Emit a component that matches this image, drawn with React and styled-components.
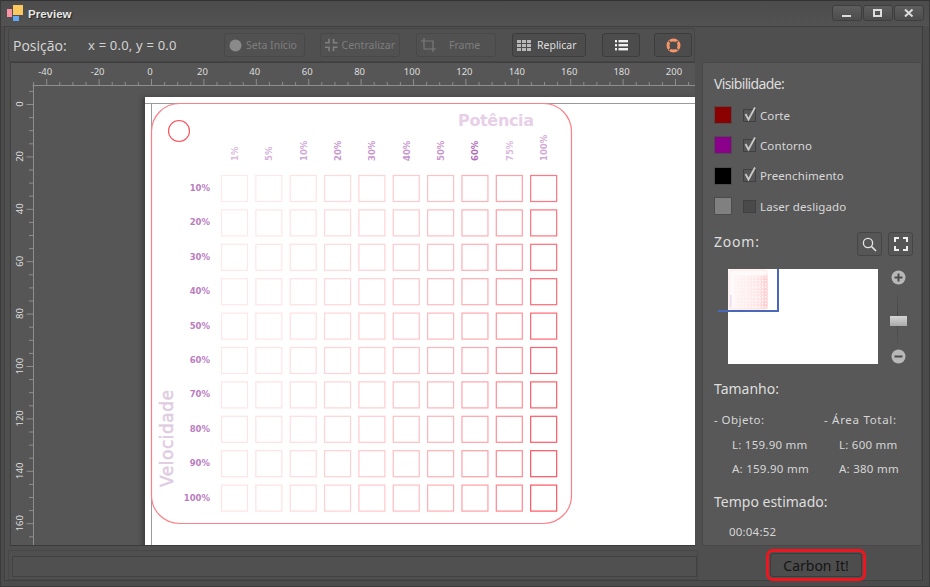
import React from 'react';
import styled, { createGlobalStyle } from 'styled-components';

const Global = createGlobalStyle`
  html, body { margin: 0; padding: 0; background: #454545; }
  body { font-family: "Noto Sans", "Liberation Sans", sans-serif; }
`;

const Win = styled.div`
  width: 930px; height: 587px; box-sizing: border-box; overflow: hidden;
  background: #4b4b4b; border: 1px solid #3a3a3a; border-top-color: #333;
  display: flex; flex-direction: column; position: relative;
`;
const TitleBar = styled.div`
  height: 25px; flex: none; display: flex; align-items: center; padding: 0 5px 0 6px;
  background: linear-gradient(#4c4c4c, #525252);
`;
const Title = styled.div`
  margin-left: 4px; color: #e6e6e6; font: bold 11.5px "Liberation Sans", sans-serif;
  text-shadow: 1px 1px 1px #222;
`;
const WinBtns = styled.div`margin-left: auto; margin-top: -2px; display: flex; gap: 1px;`;
const WinBtn = styled.div`
  width: 28px; height: 14px; border: 1px solid #3e3e3e; border-radius: 3px;
  background: linear-gradient(#5e5e5e, #4c4c4c); display: flex; align-items: center; justify-content: center;
`;
const Body = styled.div`
  flex: 1; min-height: 0; margin: 0 6px 5px 3px; border: 1px solid #404040; border-right-color:#3c3c3c;
  background: #4f4f4f; display: flex; flex-direction: column; padding: 1px 0 0 3px;
`;
const Workspace = styled.div`display: flex; gap: 7px; height: 518px; flex: none;`;
const LeftCol = styled.div`width: 687px; flex: none; display: flex; flex-direction: column;`;
const Toolbar = styled.div`
  height: 34px; box-sizing: border-box; flex: none; display: flex; align-items: center;
  background: #505050; border: 1px solid #454545; border-radius: 3px; padding: 0 0 0 4px;
`;
const PosLabel = styled.span`color: #d8d8d8; font-size: 14px; width: 75px; flex:none; font-family:"Open Sans",sans-serif;`;
const PosValue = styled.span`color: #d2d2d2; font-size: 13px; width: 136px; flex:none; letter-spacing:.2px; white-space: nowrap;`;
const ToolBtn = styled.button`
  height: 24px; box-sizing: border-box; width: ${p => p.$w}px; margin-right: ${p => p.$mr}px; padding: 0 4px;
  display: flex; align-items: center; justify-content: ${p => p.$center ? 'center' : 'flex-start'}; gap: 4px;
  border-radius: 3px; flex: none; font: 10.5px "Noto Sans", sans-serif;
  background: ${p => p.$off ? '#515151' : '#4c4c4c'};
  border: 1px solid ${p => p.$off ? '#484848' : '#3c3c3c'};
  color: ${p => p.$off ? '#7e7e7e' : '#dedede'};
`;
const BtnText = styled.span`white-space: nowrap; margin-left: ${p => p.$ml || 0}px;`;
const Canvas = styled.div`
  flex: 1; min-height: 0; position: relative; overflow: hidden; margin: 0 0 0 2px;
  background: #565656; border: 1px solid #3f3f3f; border-bottom-color:#3a3a3a; border-right: 0;
`;
const RulerArt = styled.svg`position: absolute; left: 0; top: 1px;`;
const Paper = styled.div`
  position: absolute; left: 134px; top: 34px; width: 560px; height: 460px; background: #fff;
  box-shadow: -3px 0 4px rgba(0,0,0,.25);
`;
const Side = styled.div`
  width: 220px; flex: none; box-sizing: border-box; margin-top: 34px; background: #585858;
  border: 1px solid #484848; border-radius: 3px; padding: 11px 11px 0; color: #dcdcdc;
  display: flex; flex-direction: column; height: 484px;
`;
const Heading = styled.div`
  font-size: 14px; line-height: 20px; color: #dedede; height: ${p => p.$h || 20}px;
  letter-spacing: ${p => p.$ls || 0}px;
`;
const VisRow = styled.div`display: flex; align-items: center; height: ${p => p.$h}px;`;
const Swatch = styled.div`
  width: 16px; height: 16px; background: ${p => p.$c}; border: 1px solid #4c4c4c; flex: none; margin-right: 11px;
`;
const Check = styled.div`
  width: 11px; height: 11px; border: 1px solid #404040; background: ${p => p.$on ? '#565656' : '#4a4a4a'}; flex: none; margin-right: 4px;
  position: relative;
`;
const CheckMark = styled.svg`position: absolute; left: 0; top: -4px;`;
const VisLabel = styled.span`font-size: 11.5px; color: #d8d8d8; letter-spacing: .1px;`;
const ZoomHead = styled.div`display: flex; align-items: center; justify-content: space-between; height: 30px; margin-top: 6px;`;
const ZoomBtns = styled.div`display: flex; gap: 6px; margin-top: 4px; margin-right: -3px;`;
const SqBtn = styled.div`
  width: 23px; height: 22px; border: 1px solid #454545; border-radius: 3px; background: #565656;
  display: flex; align-items: center; justify-content: center;
`;
const ZoomArea = styled.div`display: flex; height: 95px; margin-top: 12px; padding-left: 14px; gap: 9px;`;
const MiniMap = styled.div`width: 150px; height: 95px; background: #fff; position: relative; flex: none;`;
const MiniH = styled.div`position: absolute; left: -10px; top: 41px; width: 61px; height: 2px; background: #4a68bb;`;
const MiniV = styled.div`position: absolute; left: 49px; top: 0; width: 2px; height: 43px; background: #4a68bb;`;
const MiniArt = styled.svg`position: absolute; left: 0; top: 0; opacity: .65;`;
const SliderCol = styled.div`
  width: 22px; height: 94px; margin-top: 1px; flex: none; display: flex; flex-direction: column; align-items: center; justify-content: space-between; position: relative;
`;
const Track = styled.div`position: absolute; left: 10px; top: 14px; bottom: 12px; width: 1px; background: linear-gradient(#5a5a5a,#444,#5a5a5a);`;
const Thumb = styled.div`
  position: relative; width: 17px; height: 10px; background: linear-gradient(#d6d6d6, #aaa); margin-top: 8px;
`;
const RoundIcon = styled.svg`position: relative; display:block;`;
const SizeHead = styled(Heading)`margin-top: 15px;`;
const Cols = styled.div`display: grid; grid-template-columns: 110px 1fr; margin-top: 11px; font-size: 11.5px; color: #d6d6d6;`;
const SizeCell = styled.div`height: 24.5px; line-height: 20px; padding-left: ${p => p.$pad || 0}px; letter-spacing:${p => p.$ls || .25}px; white-space: nowrap;`;
const TimeHead = styled(Heading)`margin-top: 8px;`;
const TimeVal = styled.div`font-size: 11.5px; line-height: 20px; color: #d6d6d6; padding-left: 15px; margin-top: 10px; letter-spacing: .2px;`;
const Bottom = styled.div`display: flex; align-items: center; height: 30px; margin-top: 4px; flex: none;`;
const StatusOuter = styled.div`
  width: 690px; height: 30px; flex: none; box-sizing: border-box; border: 1px solid #474747; padding: 5px 0 0 3px;
`;
const Status = styled.div`
  width: 685px; height: 21px; box-sizing: border-box; border: 1px solid #424242; background: #505050;
`;
const Carbon = styled.button`
  margin-left: 72px; width: 92px; height: 24px; box-sizing: border-box; background: #4d4d4d; color: #151515;
  border: 1px solid #3d3d3d; border-radius: 3px; outline: 3px solid #f0141e; outline-offset: 1px;
  font: 14px "Noto Sans", sans-serif; padding: 0;
`;

const S = 2.62;
const HorizontalRuler = () => {
  const ticks = [];
  for (let v = -45; v <= 205; v += 5) {
    const x = 140 + v * S + 0.5;
    const major = v % 20 === 0;
    ticks.push(<line key={v} x1={x} x2={x} y1={major ? 15 : 18} y2={21} stroke="#8e8e8e" />);
  }
  const ticksV = [];
  for (let v = -5; v <= 165; v += 5) {
    const y = 40.5 + v * S;
    const major = v % 20 === 0;
    ticksV.push(<line key={v} y1={y} y2={y} x1={major ? 15.5 : 18} x2={22} stroke="#8e8e8e" />);
  }
  const labels = [-40,-20,0,20,40,60,80,100,120,140,160,180,200];
  const vLabels = [0,20,40,60,80,100,120,140,160];
  return (
    <RulerArt width="684" height="482" fontFamily="'Noto Sans', sans-serif" fontSize="9.5" fill="#dedede">
      <line x1="21.5" x2="684" y1="21.5" y2="21.5" stroke="#8e8e8e" />
      <line x1="22.5" x2="22.5" y1="21" y2="482" stroke="#8e8e8e" />
      {ticks}{ticksV}
      {labels.map(v => <text key={v} x={140 + v * S - 1} y="11" textAnchor="middle">{v}</text>)}
      {vLabels.map(v => <text key={v} textAnchor="middle" transform={`translate(12 ${40 + v * S}) rotate(-90)`}>{v}</text>)}
    </RulerArt>
  );
};

const powers = ['1%','5%','10%','20%','30%','40%','50%','60%','75%','100%'];
const speeds = ['10%','20%','30%','40%','50%','60%','70%','80%','90%','100%'];
const alphas = [.16,.18,.21,.27,.32,.38,.46,.56,.7,1];
const labelAlpha = [.4,.45,.5,.6,.6,.6,.6,.85,.4,.5];

const Drawing = () => (
  <svg width="560" height="460" fontFamily="'DejaVu Sans', sans-serif">
    <line x1="0" x2="560" y1="6.5" y2="6.5" stroke="#9a9a9a" />
    <line x1="6.5" x2="6.5" y1="6" y2="460" stroke="#9a9a9a" />
    <rect x="6.5" y="6.5" width="420" height="420" rx="28" ry="28" fill="#fff" stroke="#ff7f88" strokeWidth="1.2" />
    <circle cx="34" cy="34" r="10.5" fill="none" stroke="#ff4d58" strokeWidth="1.1" />
    <text x="351" y="29" textAnchor="middle" fontSize="16" fontWeight="bold" fill="#e8cfe8" textLength="76">Potência</text>
    <text transform="translate(28 390) rotate(-90)" fontSize="17" fill="#e0cce2" stroke="#e0cce2" strokeWidth=".5" textLength="97">Velocidade</text>
    {powers.map((p, c) => (
      <text key={p} transform={`translate(${93 + c * 34.35} 64) rotate(-90)`} fontSize="8.5" fontWeight="bold" fill="#a552ad" opacity={labelAlpha[c]}>{p}</text>
    ))}
    {speeds.map((p, r) => (
      <text key={p} x="65" y={94 + r * 34.4} textAnchor="end" fontSize="8.5" fontWeight="bold" fill="#a552ad" opacity={.75}>{p}</text>
    ))}
    {speeds.map((_, r) => powers.map((__, c) => (
      <rect key={`${r}-${c}`} x={76.5 + c * 34.35} y={78.5 + r * 34.4} width="26" height="26" fill="none"
        stroke="#ff5560" strokeWidth="1.2" opacity={alphas[c] * (0.8 + r * 0.025)} />
    )))}
  </svg>
);

const Thumbnail = () => (
  <MiniArt width="41" height="41">
    <rect x="1" y="1" width="38" height="39" rx="3" fill="#fff8f8" stroke="#ffd8da" />
    {Array.from({ length: 10 }).map((_, r) => Array.from({ length: 10 }).map((__, c) => (
      <rect key={`${r}${c}`} x={7 + c * 3.3} y={7 + r * 3.3} width="2.4" height="2.4" fill="none" stroke="#ff8a90" strokeWidth=".5" opacity={alphas[c]} />
    )))}
    <rect x="2" y="26" width="1.5" height="12" fill="#e4c8e6" />
  </MiniArt>
);

const Tick = () => (
  <CheckMark width="14" height="16" viewBox="0 0 14 16">
    <path d="M1.5 8l3 5.5 6.5-12" fill="none" stroke="#c8c8c8" strokeWidth="1.8" />
  </CheckMark>
);

export default function App() {
  return (
    <>
      <Global />
      <Win>
        <TitleBar>
          <svg width="17" height="17" viewBox="0 0 17 17">
            <rect x="0" y="4" width="5" height="8" fill="#fb93a6" />
            <rect x="6" y="0" width="10" height="10" fill="#fbc75f" />
            <rect x="6" y="11" width="6" height="5" fill="#62a8f5" />
          </svg>
          <Title>Preview</Title>
          <WinBtns>
            <WinBtn><svg width="10" height="8"><rect x="0" y="6" width="9" height="2" fill="#ddd" /></svg></WinBtn>
            <WinBtn><svg width="10" height="8"><rect x="1" y="1" width="7" height="6" fill="none" stroke="#ddd" strokeWidth="2" /></svg></WinBtn>
            <WinBtn><svg width="10" height="8"><path d="M1 0.5 L8.5 7.5 M8.5 0.5 L1 7.5" stroke="#ddd" strokeWidth="2" /></svg></WinBtn>
          </WinBtns>
        </TitleBar>
        <Body>
          <Workspace>
            <LeftCol>
              <Toolbar>
                <PosLabel>Posição:</PosLabel>
                <PosValue>x = 0.0, y = 0.0</PosValue>
                <ToolBtn $off $w={81} $mr={15}>
                  <svg width="13" height="13"><circle cx="6.5" cy="6.5" r="6" fill="#8a8a8a" /></svg>
                  <BtnText>Seta Início</BtnText>
                </ToolBtn>
                <ToolBtn $off $w={80} $mr={16}>
                  <svg width="14" height="14" viewBox="0 0 14 14" fill="none" stroke="#808080" strokeWidth="1.8">
                    <path d="M4.5 0v4.5H0M9.5 0v4.5H14M4.5 14V9.5H0M9.5 14V9.5H14" />
                  </svg>
                  <BtnText>Centralizar</BtnText>
                </ToolBtn>
                <ToolBtn $off $w={80} $mr={16}>
                  <svg width="15" height="14" viewBox="0 0 15 14" fill="none" stroke="#7a7a7a" strokeWidth="1.2">
                    <path d="M3 0v11h12M0 3h12v11" />
                  </svg>
                  <BtnText $ml={9}>Frame</BtnText>
                </ToolBtn>
                <ToolBtn $w={74} $mr={16}>
                  <svg width="14" height="11" fill="#b8b8b8">
                    {[0, 4, 8].map(y => [0, 5, 10].map(x => <rect key={`${x}${y}`} x={x} y={y} width="4" height="3" />))}
                  </svg>
                  <BtnText $ml={2}>Replicar</BtnText>
                </ToolBtn>
                <ToolBtn $w={38} $mr={14} $center>
                  <svg width="13" height="11" fill="#f0f0f0">
                    {[0, 4, 8].map(y => <React.Fragment key={y}><rect x="0" y={y} width="2" height="2.4" /><rect x="3.5" y={y} width="9.5" height="2.4" /></React.Fragment>)}
                  </svg>
                </ToolBtn>
                <ToolBtn $w={38} $mr={0} $center>
                  <svg width="15" height="15" viewBox="0 0 15 15">
                    <circle cx="7.5" cy="7.5" r="5.5" fill="none" stroke="#f79468" strokeWidth="3" />
                    <path d="M3 3l2 2M12 3l-2 2M3 12l2-2M12 12l-2-2" stroke="#4c4c4c" strokeWidth="1.2" />
                  </svg>
                </ToolBtn>
              </Toolbar>
              <Canvas>
                <HorizontalRuler />
                <Paper><Drawing /></Paper>
              </Canvas>
            </LeftCol>
            <Side>
              <Heading $h={26} $ls={-.65}>Visibilidade:</Heading>
              <VisRow $h={30}><Swatch $c="#8b0000" /><Check $on><Tick /></Check><VisLabel>Corte</VisLabel></VisRow>
              <VisRow $h={30}><Swatch $c="#8b008b" /><Check $on><Tick /></Check><VisLabel>Contorno</VisLabel></VisRow>
              <VisRow $h={31}><Swatch $c="#000" /><Check $on><Tick /></Check><VisLabel>Preenchimento</VisLabel></VisRow>
              <VisRow $h={30}><Swatch $c="#808080" /><Check /><VisLabel>Laser desligado</VisLabel></VisRow>
              <ZoomHead>
                <Heading $ls={.8}>Zoom:</Heading>
                <ZoomBtns>
                  <SqBtn>
                    <svg width="15" height="15" viewBox="0 0 15 15" fill="none" stroke="#e6e6e6" strokeWidth="1.3">
                      <circle cx="6" cy="6" r="4.6" /><path d="M9.5 9.5L14 14" strokeWidth="1.6" />
                    </svg>
                  </SqBtn>
                  <SqBtn>
                    <svg width="14" height="14" viewBox="0 0 14 14" fill="none" stroke="#eee" strokeWidth="2">
                      <path d="M1 5V1h4M9 1h4v4M1 9v4h4M9 13h4V9" />
                    </svg>
                  </SqBtn>
                </ZoomBtns>
              </ZoomHead>
              <ZoomArea>
                <MiniMap><Thumbnail /><MiniH /><MiniV /></MiniMap>
                <SliderCol>
                  <Track />
                  <RoundIcon width="15" height="15" viewBox="0 0 15 15">
                    <circle cx="7.5" cy="7.5" r="7" fill="#b8b8b8" /><path d="M3.5 7.5h8M7.5 3.5v8" stroke="#4c4c4c" strokeWidth="2" />
                  </RoundIcon>
                  <Thumb />
                  <RoundIcon width="15" height="15" viewBox="0 0 15 15">
                    <circle cx="7.5" cy="7.5" r="7" fill="#b8b8b8" /><path d="M3.5 7.5h8" stroke="#4c4c4c" strokeWidth="2" />
                  </RoundIcon>
                </SliderCol>
              </ZoomArea>
              <SizeHead>Tamanho:</SizeHead>
              <Cols>
                <SizeCell $ls={.45}>- Objeto:</SizeCell><SizeCell $ls={.7}>- Área Total:</SizeCell>
                <SizeCell $pad={18}>L: 159.90 mm</SizeCell><SizeCell $pad={15}>L: 600 mm</SizeCell>
                <SizeCell $pad={18}>A: 159.90 mm</SizeCell><SizeCell $pad={15}>A: 380 mm</SizeCell>
              </Cols>
              <TimeHead>Tempo estimado:</TimeHead>
              <TimeVal>00:04:52</TimeVal>
            </Side>
          </Workspace>
          <Bottom>
            <StatusOuter><Status /></StatusOuter>
            <Carbon>Carbon It!</Carbon>
          </Bottom>
        </Body>
      </Win>
    </>
  );
}
